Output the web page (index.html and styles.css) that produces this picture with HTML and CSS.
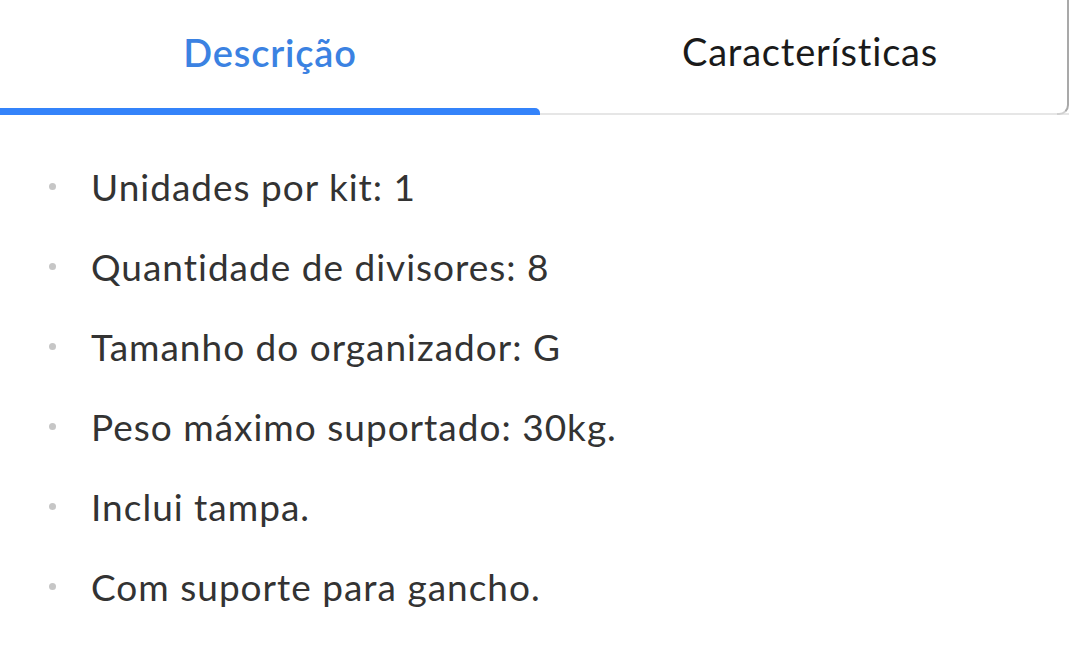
FILE: index.html
```html
<!DOCTYPE html>
<html lang="pt">
<head>
<meta charset="utf-8">
<link rel="stylesheet" href="styles.css">
</head>
<body>
<div class="tabs">
  <div class="tab active"><span class="label">Descrição</span><span class="indicator"></span></div>
  <div class="tab"><span class="label">Características</span></div>
</div>
<ul class="specs">
  <li><span class="dot"></span><span>Unidades por kit: 1</span></li>
  <li><span class="dot"></span><span>Quantidade de divisores: 8</span></li>
  <li><span class="dot"></span><span>Tamanho do organizador: G</span></li>
  <li><span class="dot"></span><span>Peso máximo suportado: 30kg.</span></li>
  <li><span class="dot"></span><span>Inclui tampa.</span></li>
  <li><span class="dot"></span><span>Com suporte para gancho.</span></li>
</ul>
</body>
</html>
```
FILE: styles.css
```css
html, body {
  margin: 0;
  padding: 0;
  background: #fff;
}
body {
  font-family: "Lato", "Liberation Sans", sans-serif;
  font-variant-ligatures: none;
  color: #333;
  width: 1080px;
  height: 647px;
  overflow: hidden;
}
.tabs {
  position: relative;
  display: flex;
  border-bottom: 2px solid #e6e6e6;
  width: 1069px;
}
.tabs::after {
  content: "";
  position: absolute;
  right: 0;
  top: -12px;
  bottom: -2px;
  width: 10px;
  border-right: 2px solid #a9a9a9;
  border-bottom: 2px solid #d0d0d0;
  border-bottom-right-radius: 10px;
}
.tab {
  flex: 0 0 540px;
  height: 113px;
  display: flex;
  flex-direction: column;
}
.tab .label {
  flex: 1;
  display: flex;
  align-items: center;
  justify-content: center;
  font-size: 38px;
  letter-spacing: 0.8px;
  color: #1a1a1a;
  padding-bottom: 12px;
}
.tab.active .label {
  color: #3b82e2;
  font-weight: 600;
  padding-bottom: 5px;
}
.indicator {
  position: relative;
  z-index: 1;
  height: 7px;
  margin-bottom: -2px;
  background: #3483fa;
  border-top-right-radius: 5px;
}
.specs {
  list-style: none;
  margin: 0;
  padding: 31px 0 0 0;
}
.specs li {
  display: flex;
  align-items: center;
  height: 80px;
  font-size: 37px;
  letter-spacing: 1px;
  color: #333;
}
.dot {
  width: 7px;
  height: 7px;
  border-radius: 50%;
  background: #c6c6c6;
  margin-left: 49px;
  margin-right: 35px;
  flex: none;
}
```
